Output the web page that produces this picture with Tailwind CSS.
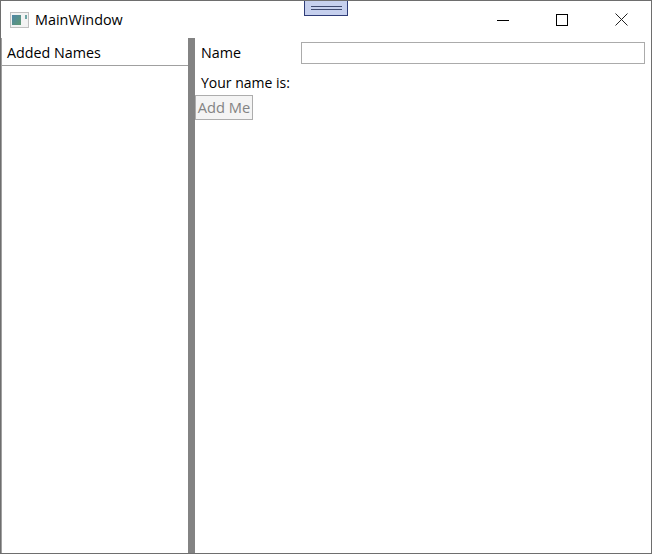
<!DOCTYPE html>
<html lang="en">
<head>
<meta charset="UTF-8">
<title>MainWindow</title>
<script src="https://cdn.jsdelivr.net/npm/@tailwindcss/browser@4"></script>
</head>
<body class="bg-white">
<div class="relative w-[652px] h-[554px] flex flex-col overflow-hidden bg-white border border-[#6e6e6e] font-['Open_Sans',sans-serif] text-[14.3px] text-black">
  <!-- title bar -->
  <div class="h-[37px] flex items-center shrink-0">
    <svg class="ml-[9px] w-[20px] h-[16px]" viewBox="0 0 20 16">
      <defs><linearGradient id="g" x1="0" y1="0" x2="1" y2="1"><stop offset="0" stop-color="#4f86a8"/><stop offset="1" stop-color="#5f9a72"/></linearGradient></defs>
      <rect x="0.5" y="0.5" width="18" height="15" fill="#f3f3f3" stroke="#c0c0c0"/>
      <rect x="2" y="3" width="9" height="10" fill="url(#g)"/>
      <rect x="15" y="3" width="2" height="4" fill="#6fa5a5"/>
    </svg>
    <span class="ml-[5px] text-[14.4px]">MainWindow</span>
    <div class="ml-auto flex items-center">
      <svg class="w-[12px] h-[12px]" viewBox="0 0 12 12"><path d="M0 6.5H12" stroke="#000" fill="none"/></svg>
      <svg class="ml-[47px] w-[12px] h-[12px]" viewBox="0 0 12 12"><rect x="0.5" y="0.5" width="11" height="11" stroke="#000" fill="none"/></svg>
      <svg class="ml-[47px] mr-[23px] w-[13px] h-[13px]" viewBox="0 0 13 13"><path d="M0.5 0.5L12.5 12.5M12.5 0.5L0.5 12.5" stroke="#222" fill="none"/></svg>
    </div>
  </div>
  <!-- content -->
  <div class="flex flex-1 min-h-0">
    <div class="w-[187px] shrink-0 border-l border-[#a0a0a0] flex flex-col">
      <div class="h-[28px] pl-[5px] pt-[2px] flex items-center border-b border-[#a0a0a0]">Added Names</div>
    </div>
    <div class="w-[7px] h-full shrink-0 bg-[#838383]"></div>
    <div class="flex-1 flex flex-col">
      <div class="flex items-center mt-[4px] h-[22px]">
        <span class="ml-[6px] w-[100px]">Name</span>
        <div class="w-[344px] h-[22px] border border-[#ababab] bg-white"></div>
      </div>
      <div class="ml-[6px] mt-[7px] h-[22px] flex items-center text-[14px]">Your name is:</div>
      <div class="mt-[2px] w-[58px] h-[25px] flex items-center justify-center bg-[#f4f4f4] border border-[#adadad] text-[#838383] text-[14.7px]">Add Me</div>
    </div>
  </div>
  <!-- debug toolbar grip -->
  <div class="absolute left-[303px] top-[-1px] w-[44px] h-[16px] bg-[#c6d0ee] border border-[#2f3d78] flex flex-col items-center justify-center gap-[2px]">
    <div class="w-[31px] h-[1px] bg-[#3f4a70]"></div>
    <div class="w-[31px] h-[1px] bg-[#3f4a70]"></div>
  </div>
</div>
</body>
</html>
